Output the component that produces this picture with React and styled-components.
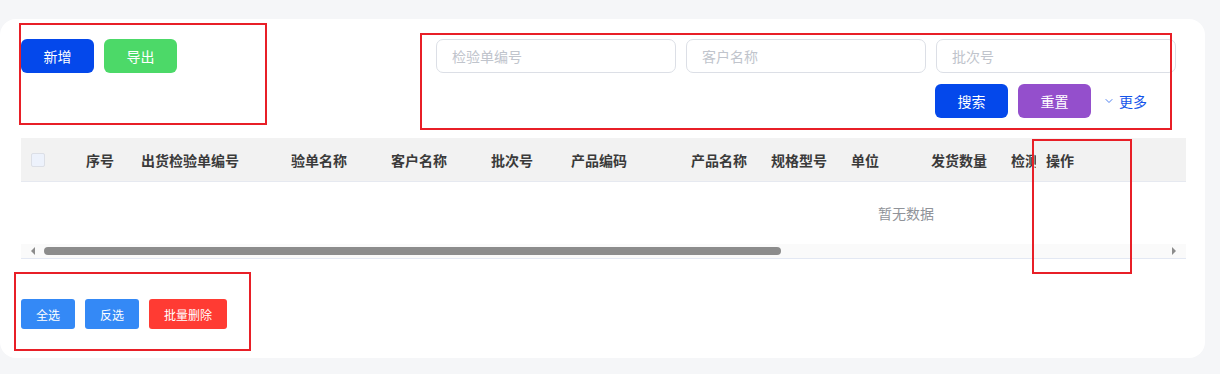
import React from 'react';
import styled, { createGlobalStyle } from 'styled-components';
import { ChevronDown } from 'lucide-react';

const GlobalStyle = createGlobalStyle`
  body {
    margin: 0;
    background: #f5f6f8;
    font-family: "Noto Sans CJK SC", "Noto Sans", sans-serif;
  }
`;

const Page = styled.div`
  position: relative;
  height: 374px;
  box-sizing: border-box;
  padding: 19px 15px 0 0;
`;

const Card = styled.div`
  background: #fff;
  border-radius: 16px;
  height: 339px;
  box-sizing: border-box;
  padding: 20px 19px 0 21px;
`;

const Toolbar = styled.div`
  display: flex;
  justify-content: space-between;
  align-items: flex-start;
`;

const ButtonGroup = styled.div`
  display: flex;
  gap: 10px;
`;

const Button = styled.button`
  width: ${({ $small }) => ($small ? '54px' : '73px')};
  height: ${({ $small }) => ($small ? '30px' : '34px')};
  padding: 0;
  border: none;
  border-radius: ${({ $small }) => ($small ? '3px' : '6px')};
  background: ${({ $color }) => $color};
  color: #fff;
  font-family: inherit;
  font-size: ${({ $small }) => ($small ? '12px' : '14px')};
  cursor: pointer;
`;

const WideButton = styled(Button)`
  width: 78px;
`;

const SearchForm = styled.div`
  display: flex;
  flex-direction: column;
  align-items: flex-end;
  gap: 11px;
  margin-right: 10px;
`;

const InputRow = styled.div`
  display: flex;
  gap: 10px;
`;

const Input = styled.input`
  width: 240px;
  height: 34px;
  box-sizing: border-box;
  border: 1px solid #dcdfe6;
  border-radius: 7px;
  padding: 0 15px;
  font-family: inherit;
  font-size: 14px;
  outline: none;
  &::placeholder {
    color: #c0c4cc;
  }
`;

const ActionRow = styled.div`
  display: flex;
  align-items: center;
  gap: 10px;
  padding-right: 29px;
`;

const MoreToggle = styled.span`
  display: flex;
  align-items: center;
  gap: 4px;
  margin-left: 2px;
  color: #1455ea;
  font-size: 14px;
  cursor: pointer;
`;

const TableWrap = styled.div`
  position: relative;
  margin-top: 20px;
  overflow: hidden;
  border-bottom: 1px solid #e3e8f3;
`;

const TableInner = styled.div`
  width: 1770px;
`;

const HeaderRow = styled.div`
  display: flex;
  height: 44px;
  background: #f2f2f2;
  border-bottom: 1px solid #e6e9f0;
  box-sizing: border-box;
`;

const HeaderCell = styled.div`
  flex: 0 0 ${({ $w }) => $w}px;
  box-sizing: border-box;
  padding: 0 10px;
  display: flex;
  align-items: center;
  font-size: 14px;
  font-weight: bold;
  color: #3a3a3a;
  white-space: nowrap;
  overflow: hidden;
`;

const CheckBox = styled.span`
  width: 14px;
  height: 14px;
  box-sizing: border-box;
  border: 1px solid #dcdfe6;
  border-radius: 2px;
  background: #edf2fc;
`;

const EmptyRow = styled.div`
  height: 62px;
  display: flex;
  align-items: center;
  justify-content: center;
  font-size: 14px;
  color: #909399;
`;

const FixedColumn = styled.div`
  position: absolute;
  top: 0;
  right: 0;
  width: 150px;
  bottom: 14px;
  background: #fff;
`;

const ScrollBar = styled.div`
  position: relative;
  height: 14px;
  background: #fafafa;
  display: flex;
  align-items: center;
  justify-content: space-between;
  padding: 0 10px;
`;

const Arrow = styled.span`
  width: 0;
  height: 0;
  border-top: 4px solid transparent;
  border-bottom: 4px solid transparent;
  ${({ $dir }) =>
    $dir === 'left'
      ? 'border-right: 4px solid #8c8c8c;'
      : 'border-left: 4px solid #8c8c8c;'}
`;

const Thumb = styled.span`
  position: absolute;
  left: 23px;
  top: 3px;
  height: 8px;
  width: 737px;
  border-radius: 4px;
  background: #8c8c8c;
`;

const Footer = styled.div`
  display: flex;
  gap: 10px;
  margin-top: 40px;
`;

const Annotation = styled.div`
  position: absolute;
  box-sizing: border-box;
  border: 2px solid #e81f27;
  pointer-events: none;
`;

// columns past 检测结果 sit under the fixed 操作 column, so only these are drawn
const columns = [
  { title: '序号', w: 55 },
  { title: '出货检验单编号', w: 150 },
  { title: '验单名称', w: 100 },
  { title: '客户名称', w: 100 },
  { title: '批次号', w: 80 },
  { title: '产品编码', w: 120 },
  { title: '产品名称', w: 80 },
  { title: '规格型号', w: 80 },
  { title: '单位', w: 80 },
  { title: '发货数量', w: 80 },
  { title: '检测结果', w: 120 },
];

// red marks drawn over the screenshot
const annotations = [
  { left: 19, top: 23, width: 248, height: 102 },
  { left: 420, top: 33, width: 752, height: 97 },
  { left: 1032, top: 139, width: 100, height: 135 },
  { left: 14, top: 272, width: 237, height: 79 },
];

const App = () => {
  return (
    <Page>
      <GlobalStyle />
      <Card>
        <Toolbar>
          <ButtonGroup>
            <Button $color="#0448eb">新增</Button>
            <Button $color="#4cd968">导出</Button>
          </ButtonGroup>
          <SearchForm>
            <InputRow>
              <Input placeholder="检验单编号" />
              <Input placeholder="客户名称" />
              <Input placeholder="批次号" />
            </InputRow>
            <ActionRow>
              <Button $color="#0448eb">搜索</Button>
              <Button $color="#944fcc">重置</Button>
              <MoreToggle>
                <ChevronDown size={12} strokeWidth={1.5} />
                更多
              </MoreToggle>
            </ActionRow>
          </SearchForm>
        </Toolbar>

        <TableWrap>
          <TableInner>
            <HeaderRow>
              <HeaderCell $w={55}>
                <CheckBox />
              </HeaderCell>
              {columns.map((col) => (
                <HeaderCell key={col.title} $w={col.w}>
                  {col.title}
                </HeaderCell>
              ))}
            </HeaderRow>
            <EmptyRow>暂无数据</EmptyRow>
          </TableInner>
          <FixedColumn>
            <HeaderRow>
              <HeaderCell $w={150}>操作</HeaderCell>
            </HeaderRow>
          </FixedColumn>
          <ScrollBar>
            <Arrow $dir="left" />
            <Thumb />
            <Arrow $dir="right" />
          </ScrollBar>
        </TableWrap>

        <Footer>
          <Button $small $color="#3489f6">全选</Button>
          <Button $small $color="#3489f6">反选</Button>
          <WideButton $small $color="#ff3b33">批量删除</WideButton>
        </Footer>
      </Card>
      {annotations.map((a, i) => (
        <Annotation key={i} style={a} />
      ))}
    </Page>
  );
};

export default App;
